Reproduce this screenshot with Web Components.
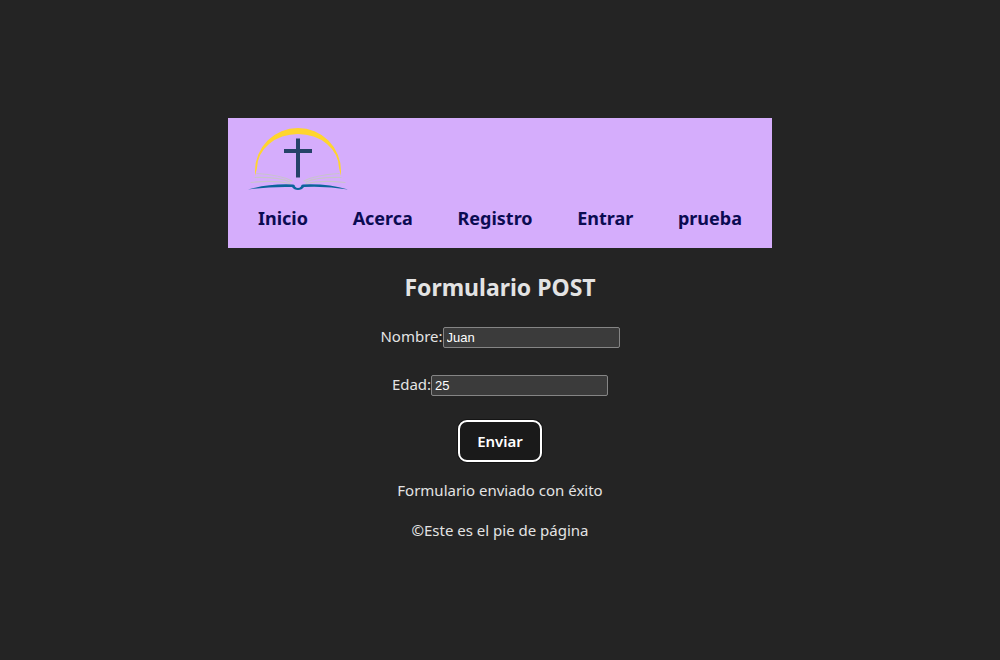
<!DOCTYPE html>
<html lang="es">
<head>
<meta charset="utf-8">
<meta name="viewport" content="width=device-width, initial-scale=1">
<title>Formulario POST</title>
<style>
  body {
    margin: 0;
    min-height: 100vh;
    background: #242424;
    color: #e3e3e3;
    color-scheme: dark;
    font-family: "Segoe UI", "Noto Sans", sans-serif;
    font-size: 15px;
    line-height: 24px;
  }
</style>
</head>
<body>
<app-page></app-page>

<script>
  const define = (name, html, setup) => {
    const template = document.createElement('template');
    template.innerHTML = html;
    customElements.define(name, class extends HTMLElement {
      constructor() {
        super();
        this.attachShadow({ mode: 'open' }).append(template.content.cloneNode(true));
      }
      connectedCallback() {
        if (setup) setup(this, this.shadowRoot);
      }
    });
  };

  define('site-logo', `
    <style>
      :host { display: block; width: 100px; height: 64px; }
      svg { display: block; width: 100%; height: 100%; }
    </style>
    <svg viewBox="0 0 100 64" role="img" aria-label="Logo">
      <path fill="#ffd52e" d="M7 50V45A43 43 0 0 1 93 45V50Q92 46 91 42A41 34 0 0 0 9 42Q8 46 7 50Z"/>
      <path fill="#254268" d="M48 12.500h4v10.500h12v4H52v24.500h-4V27H36v-4h12z"/>
      <g fill="none" stroke="#c8c4ca" stroke-width="1.200" stroke-linecap="round">
        <path d="M9 47.500Q33 49 44 55M7 51.500Q31 51 42 56M3 56.500Q26 54 42 57.500"/>
        <path d="M91 47.500Q67 49 56 55M93 51.500Q69 51 58 56M97 56.500Q74 54 58 57.500"/>
      </g>
      <path fill="#0b649c" d="M0 63.500Q20 57.500 45 58.500Q47 58.500 47 60.500Q50 63.500 53 60.500Q53 58.500 55 58.500Q80 57.500 100 63.500Q79 60 56 61Q54 64 50 64T44 61Q20 60.500 0 63.500Z"/>
    </svg>`);

  define('nav-link', `
    <style>
      :host { display: block; }
      a { color: #0b0b52; font-weight: 700; font-size: 18px; line-height: 28px; text-decoration: none; }
    </style>
    <a href="#"><slot></slot></a>`,
    (host, root) => { root.querySelector('a').href = host.getAttribute('to'); });

  define('site-header', `
    <style>
      :host { display: block; width: 100%; max-width: 544px; background: #d5adfc; }
      header { padding: 8px 20px 16px; }
      nav { display: flex; flex-wrap: wrap; justify-content: space-between; padding: 14px 10px 0; }
    </style>
    <header>
      <site-logo></site-logo>
      <nav>
        <nav-link to="#inicio">Inicio</nav-link>
        <nav-link to="#acerca">Acerca</nav-link>
        <nav-link to="#registro">Registro</nav-link>
        <nav-link to="#entrar">Entrar</nav-link>
        <nav-link to="#prueba">prueba</nav-link>
      </nav>
    </header>`);

  define('text-field', `
    <style>
      :host { display: flex; justify-content: center; align-items: flex-end; }
      input {
        box-sizing: border-box; width: 177px; height: 21px; margin: 0; padding: 1px 3px;
        border: 1px solid #858585; border-radius: 2px; background: #3b3b3b; color: #fff;
        font: 13px/17px Arial, "Liberation Sans", sans-serif;
      }
    </style>
    <label for="field"></label><input id="field" type="text">`,
    (host, root) => {
      root.querySelector('label').textContent = host.getAttribute('label');
      root.querySelector('input').value = host.getAttribute('value');
    });

  define('post-form', `
    <style>
      :host { display: block; }
      h2 { margin: 0 0 19px; font-size: 23px; line-height: 36px; text-align: center; }
      form { display: flex; flex-direction: column; align-items: center; gap: 24px; }
      button {
        box-sizing: border-box; min-width: 84px; height: 42px; padding: 0 16px;
        border: 2px solid #fff; border-radius: 9px; background: #1a1a1a; color: #fff;
        box-shadow: 0 0 0 1px #141414; font: 600 15px/24px "Segoe UI", "Noto Sans", sans-serif;
      }
      p { margin: 16px 0 0; text-align: center; }
    </style>
    <h2>Formulario POST</h2>
    <form>
      <text-field label="Nombre:" value="Juan"></text-field>
      <text-field label="Edad:" value="25"></text-field>
      <button type="submit">Enviar</button>
    </form>
    <p role="status">Formulario enviado con éxito</p>`,
    (host, root) => root.querySelector('form').addEventListener('submit', e => e.preventDefault()));

  define('site-footer', `
    <style>:host { display: block; text-align: center; }</style>
    <footer><slot></slot></footer>`);

  define('app-page', `
    <style>
      :host { display: flex; flex-direction: column; align-items: center; justify-content: center; min-height: 100vh; }
      main { margin: 21px 0 16px; }
    </style>
    <site-header></site-header>
    <main><post-form></post-form></main>
    <site-footer>©Este es el pie de página</site-footer>`);
</script>
</body>
</html>
